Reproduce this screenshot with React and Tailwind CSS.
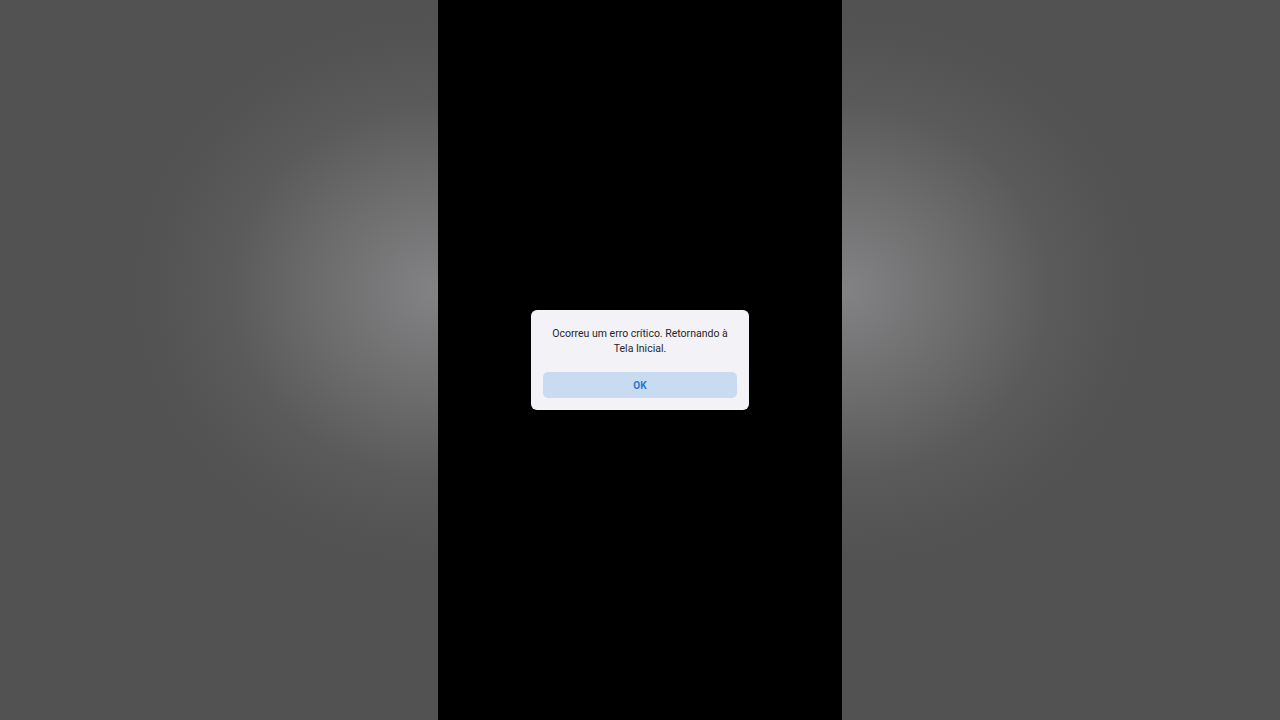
export default function App() {
    return (
        <div className="flex h-[720px] w-[1280px] overflow-hidden" style={{ fontFamily: "Roboto, 'Liberation Sans', sans-serif" }}>
            <div className="w-[438px] h-full bg-[radial-gradient(ellipse_300px_270px_at_100%_290px,#838385,#6c6c6d_40%,#5a5a5a_70%,#525252)]" />
            <div className="w-[404px] h-full bg-black flex items-center justify-center">
                <div className="w-[218px] rounded-[6px] bg-[#f3f2f6] px-3 pt-4 pb-3">
                    <p className="text-center text-[10.5px] leading-[15px] text-[#262626] px-2">
                        Ocorreu um erro crítico. Retornando à Tela Inicial.
                    </p>
                    <button className="mt-4 w-full h-[26px] rounded-[5px] bg-[#c8dbf0] text-[10px] font-bold text-[#2b78d0]">
                        OK
                    </button>
                </div>
            </div>
            <div className="flex-1 h-full bg-[radial-gradient(ellipse_300px_270px_at_0%_290px,#838385,#6c6c6d_40%,#5a5a5a_70%,#525252)]" />
        </div>
    );
}
